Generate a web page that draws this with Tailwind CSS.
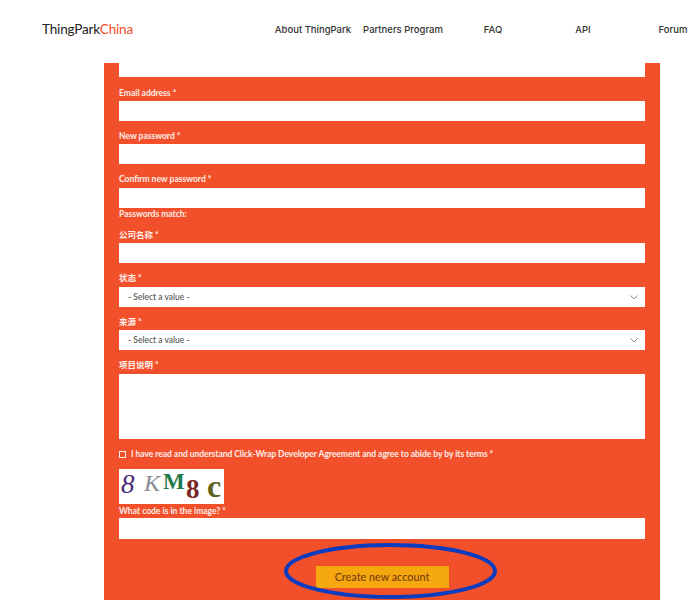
<!DOCTYPE html>
<html lang="en">
<head>
  <meta charset="UTF-8" />
  <title>ThingPark China - Create new account</title>
  <script src="https://cdn.jsdelivr.net/npm/@tailwindcss/browser@4"></script>
</head>
<body class="bg-white font-['Lato','Noto_Sans_CJK_SC',sans-serif]">
  <div class="relative w-[700px] h-[600px] overflow-hidden">

    <!-- Header -->
    <header class="flex items-center h-[63px] pb-[4px]">
      <a class="ml-[42px] w-[226px] shrink-0 text-[13.6px] tracking-[-0.2px] font-normal text-[#222]">ThingPark<span class="text-[#f2502a]">China</span></a>
      <nav class="grid grid-cols-[90px_90px_90px_90px_90px] shrink-0 pt-[2px] text-center text-[9.5px] font-medium text-[#333] font-['Inter',sans-serif] whitespace-nowrap">
        <a>About ThingPark</a>
        <a>Partners Program</a>
        <a>FAQ</a>
        <a>API</a>
        <a>Forum</a>
      </nav>
    </header>

    <!-- Form panel -->
    <form class="ml-[104px] w-[556px] h-[537px] bg-[#f2502a] px-[15px] text-[8.5px] font-bold text-white/90">
      <div class="h-[14px] bg-white"></div>

      <label class="block mt-[9px] h-[15px] leading-[15px]">Email address *</label>
      <input class="block w-full h-[20px] bg-white" />

      <label class="block mt-[8px] h-[15px] leading-[15px]">New password *</label>
      <input class="block w-full h-[20px] bg-white" />

      <label class="block mt-[8px] h-[16px] leading-[15px]">Confirm new password *</label>
      <input class="block w-full h-[20px] bg-white" />
      <p class="h-[13px] leading-[13px]">Passwords match:</p>

      <label class="block mt-[8px] h-[14px] leading-[12px]">公司名称 *</label>
      <input class="block w-full h-[20px] bg-white" />

      <label class="block mt-[8px] h-[16px] leading-[14px]">状态 *</label>
      <div class="flex items-center justify-between h-[20px] bg-white pl-[9px] pr-[7px] font-medium text-[#555]">
        <span>- Select a value -</span>
        <svg class="w-[8px] h-[5px]" viewBox="0 0 8 5" fill="none" stroke="#888" stroke-width="1"><path d="M0.5 0.5 4 4 7.5 0.5" /></svg>
      </div>

      <label class="block mt-[8px] h-[15px] leading-[15px]">来源 *</label>
      <div class="flex items-center justify-between h-[20px] bg-white pl-[9px] pr-[7px] font-medium text-[#555]">
        <span>- Select a value -</span>
        <svg class="w-[8px] h-[5px]" viewBox="0 0 8 5" fill="none" stroke="#888" stroke-width="1"><path d="M0.5 0.5 4 4 7.5 0.5" /></svg>
      </div>

      <label class="block mt-[9px] h-[15px] leading-[13px]">项目说明 *</label>
      <textarea class="block w-full h-[65px] bg-white resize-none"></textarea>

      <div class="flex items-center gap-[5px] mt-[9px] h-[12px]">
        <span class="w-[7px] h-[7px] border border-white/90"></span>
        <span class="tracking-[-0.04px]">I have read and understand Click-Wrap Developer Agreement and agree to abide by by its terms *</span>
      </div>

      <!-- Captcha -->
      <div class="flex items-center w-[105px] h-[35px] mt-[9px] pl-[2px] bg-white font-['Liberation_Serif',serif] text-[27px] leading-none font-bold overflow-hidden">
        <span class="w-[23px] italic font-normal text-[#4a2a78] -translate-y-[2px]">8</span>
        <span class="w-[19px] font-normal italic text-[#8a8a94] text-[24px] -translate-y-[4px]">K</span>
        <span class="w-[23px] text-[#1f7a4a] text-[23px] -translate-y-[5px]">M</span>
        <span class="w-[21px] text-[#7a2626] translate-y-[3px]">8</span>
        <span class="text-[#5c6420] text-[32px] -translate-y-[1px]">c</span>
      </div>

      <label class="block h-[13px] leading-[13px] mt-[1px]">What code is in the image? *</label>
      <input class="block w-full h-[21px] bg-white" />

      <div class="flex justify-center mt-[27px]">
        <button type="button" class="w-[133px] h-[22px] bg-[#f4a70f] text-[10.8px] font-medium text-[#7a3d0c]">Create new account</button>
      </div>
    </form>

    <!-- Hand-drawn highlight round the button -->
    <svg class="absolute left-[280px] top-[540px] w-[220px] h-[60px]" viewBox="0 0 220 60" fill="none">
      <ellipse cx="110.5" cy="31" rx="104.5" ry="26" stroke="#0a3cc0" stroke-width="4" />
    </svg>
  </div>
</body>
</html>
